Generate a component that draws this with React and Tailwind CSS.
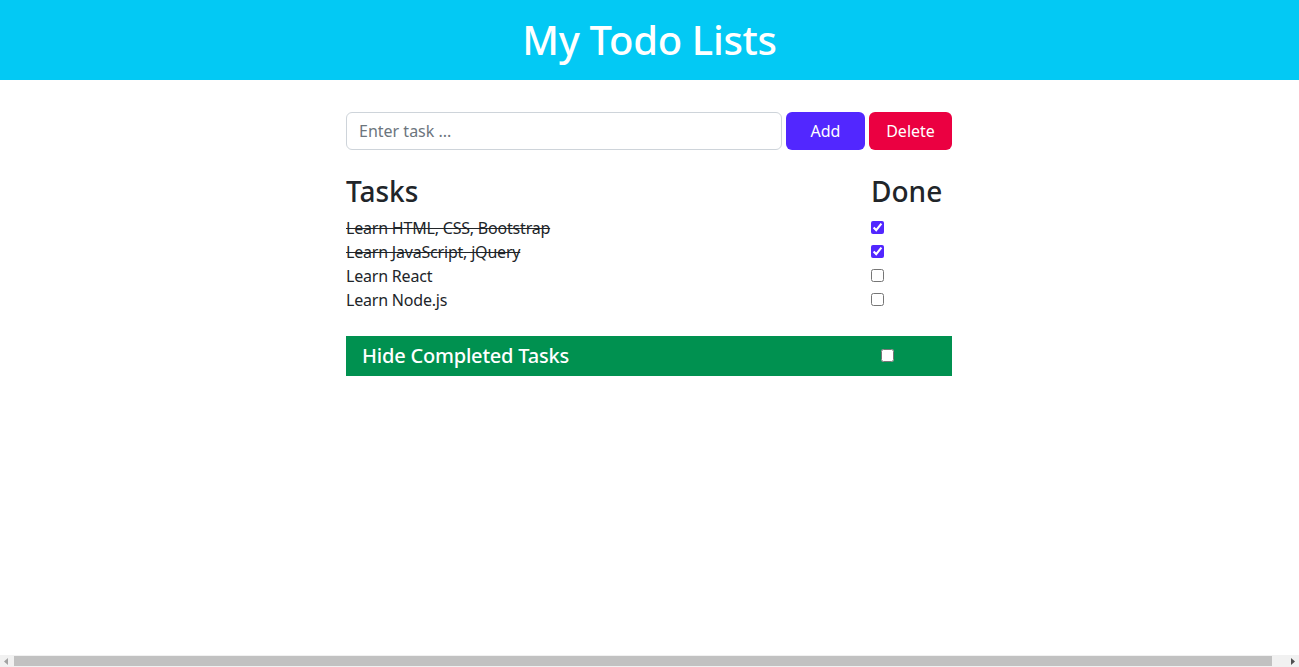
import React, { useState } from "react";

const initial = [
  { name: "Learn HTML, CSS, Bootstrap", done: true },
  { name: "Learn JavaScript, jQuery", done: true },
  { name: "Learn React", done: false },
  { name: "Learn Node.js", done: false },
];

export default function App() {
  const [tasks, setTasks] = useState(initial);
  const [hide, setHide] = useState(false);
  const shown = hide ? tasks.filter((t) => !t.done) : tasks;
  return (
    <div
      className="bg-white text-[#212529] text-[16px] leading-6 min-h-screen"
      style={{ fontFamily: '"Noto Sans", "Open Sans", sans-serif' }}
    >
      <header className="h-20 bg-[#03c9f4] flex items-center justify-center">
        <h1 className="text-[40px] font-medium text-white leading-none tracking-[-0.3px]">My Todo Lists</h1>
      </header>
      <main className="flex justify-center pr-px">
        <div className="w-[606px] pt-8">
          <div className="flex gap-1 h-[38px]">
            <input
              className="flex-1 border border-[#ced4da] rounded-md px-3 text-[16px] placeholder:text-[#6c757d] outline-none"
              placeholder="Enter task ..."
            />
            <button className="w-[79px] rounded-md bg-[#5227ff] text-white">Add</button>
            <button className="w-[83px] rounded-md bg-[#eb0041] text-white">Delete</button>
          </div>
          <table className="w-full mt-[24px] border-collapse">
            <thead>
              <tr>
                <th className="text-left text-[28px] font-medium leading-[34px] pb-[8px]">Tasks</th>
                <th className="text-left text-[28px] font-medium leading-[34px] pb-[8px] w-[81px]">Done</th>
              </tr>
            </thead>
            <tbody>
              {shown.map((t) => (
                <tr key={t.name}>
                  <td className={t.done ? "line-through tracking-[-0.2px]" : "tracking-[-0.2px]"}>{t.name}</td>
                  <td className="align-top pt-[5px]">
                    <input
                      type="checkbox"
                      className="block accent-[#5227ff] m-0 w-[13px] h-[13px]"
                      checked={t.done}
                      onChange={() =>
                        setTasks(tasks.map((x) => (x.name === t.name ? { ...x, done: !x.done } : x)))
                      }
                    />
                  </td>
                </tr>
              ))}
            </tbody>
          </table>
          <div className="mt-6 h-10 bg-[#009150] flex items-center pl-4 text-white">
            <span className="flex-1 text-[20px] font-medium tracking-[-0.2px]">Hide Completed Tasks</span>
            <input
              type="checkbox"
              className="m-0 w-[13px] h-[13px] mr-[58px] -mt-px"
              checked={hide}
              onChange={() => setHide(!hide)}
            />
          </div>
        </div>
      </main>
      <div className="fixed left-0 right-0 bottom-0 h-3 bg-[#f1f1f1] flex items-center">
        <div className="w-3 h-3 flex items-center justify-center">
          <svg width="4" height="7" viewBox="0 0 4 7"><path d="M4 0 L0 3.5 L4 7 Z" fill="#a3a3a3" /></svg>
        </div>
        <div className="flex-1 h-[10px] ml-[2px] mr-[15px] bg-[#c1c1c1]" />
        <div className="w-3 h-3 flex items-center justify-center">
          <svg width="4" height="7" viewBox="0 0 4 7"><path d="M0 0 L4 3.5 L0 7 Z" fill="#505050" /></svg>
        </div>
      </div>
    </div>
  );
}
